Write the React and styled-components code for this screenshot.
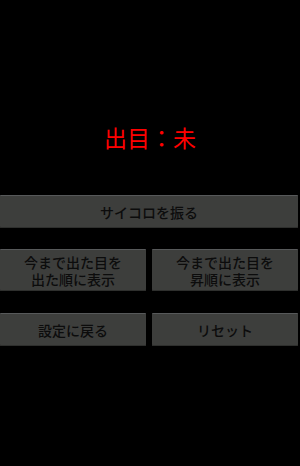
import React from "react";
import styled, { createGlobalStyle } from "styled-components";

const Global = createGlobalStyle`
  html, body { margin: 0; padding: 0; background: #000; }
  body { width: 300px; height: 466px; overflow: hidden; font-family: "Noto Sans CJK JP", "Noto Sans", sans-serif; }
`;

const Screen = styled.div`
  width: 300px;
  height: 466px;
  background: #000;
  display: flex;
  flex-direction: column;
  padding: 123px 2px 0 0;
  box-sizing: border-box;
`;

const Status = styled.div`
  color: #ff0000;
  font-size: 23px;
  line-height: 28px;
  text-align: center;
  padding-left: 2px;
  margin-bottom: 44px;
`;

const Row = styled.div`
  display: grid;
  grid-template-columns: ${(p) => (p.$cols === 2 ? "1fr 1fr" : "1fr")};
  gap: 6px;
  margin-bottom: ${(p) => p.$mb || 0}px;
`;

const Button = styled.button`
  height: ${(p) => p.$h}px;
  margin: 0;
  padding: 0;
  border: none;
  border-top: 1px solid #57595a;
  border-radius: 1px;
  background: #3d3e3c;
  color: #0c0c0c;
  font-family: "Noto Sans CJK JP", "Noto Sans", sans-serif;
  font-size: 14px;
  font-weight: 500;
  line-height: 17px;
  text-align: center;
  box-shadow: inset 0 -1px 0 #2e2f2d;
`;

export default function App() {
  return (
    <>
      <Global />
      <Screen>
        <Status>出目：未</Status>
        <Row $mb={21}>
          <Button $h={33}>サイコロを振る</Button>
        </Row>
        <Row $cols={2} $mb={22}>
          <Button $h={42}>今まで出た目を<br />出た順に表示</Button>
          <Button $h={42}>今まで出た目を<br />昇順に表示</Button>
        </Row>
        <Row $cols={2}>
          <Button $h={33}>設定に戻る</Button>
          <Button $h={33}>リセット</Button>
        </Row>
      </Screen>
    </>
  );
}
